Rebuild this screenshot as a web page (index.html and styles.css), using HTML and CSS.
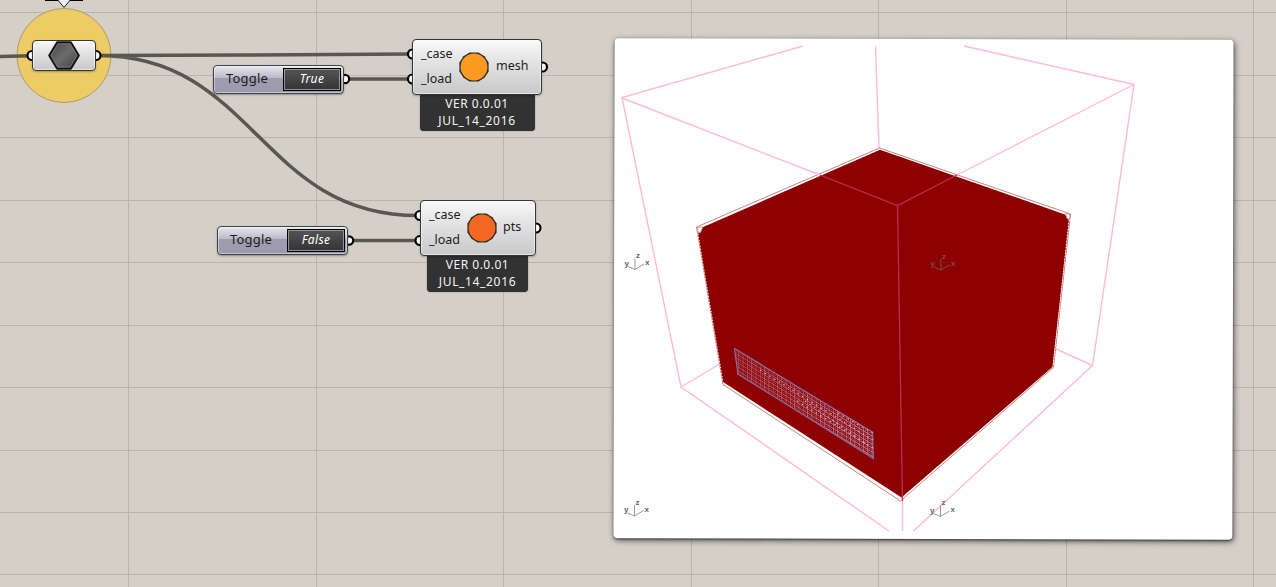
FILE: index.html
```html
<!DOCTYPE html>
<html lang="en">
<head>
<meta charset="utf-8">
<title>Node canvas</title>
<link rel="stylesheet" href="styles.css">
</head>
<body>
<main class="canvas">
  <svg class="layer" viewBox="0 0 1276 587">
    <path class="grid" d="M128.5 0V587M316.5 0V587M503.5 0V587M691.5 0V587M878.5 0V587M1066.5 0V587M1253.5 0V587M0 12.5H1276M0 75.5H1276M0 137.5H1276M0 200.5H1276M0 262.5H1276M0 325.5H1276M0 387.5H1276M0 450.5H1276M0 512.5H1276M0 574.5H1276"/>
    <circle class="halo" cx="64" cy="55.500" r="47"/>
    <path class="marker-line" d="M45 0H83"/>
    <path class="marker" d="M57 -1L64 7.500L71 -1"/>
    <path class="wire" d="M0 56.500L31 55.800M98 55.500C200 55.500 310 54.500 411 54M98 55.500C255 55.500 260 215.500 418 215.500M346 79H411M350 240.500H418"/>
    <g class="grip">
      <circle cx="32" cy="55.500" r="4.500"/><circle cx="96" cy="55.500" r="4.500"/>
      <circle cx="345" cy="79" r="4.200"/><circle cx="349" cy="240.500" r="4.200"/>
      <circle cx="412.500" cy="54" r="4.500"/><circle cx="412.500" cy="79" r="4.500"/><circle cx="542.500" cy="67" r="4.500"/>
      <circle cx="420" cy="215.500" r="4.500"/><circle cx="420" cy="240.500" r="4.500"/><circle cx="536" cy="228" r="4.500"/>
    </g>
  </svg>

  <div class="node hexnode">
    <svg width="32" height="29" viewBox="1 .5 30 27">
      <defs>
        <linearGradient id="hexfill" x1="0" y1="0" x2="1" y2="1"><stop offset="0" stop-color="#333"/><stop offset=".5" stop-color="#666"/><stop offset="1" stop-color="#2b2b2b"/></linearGradient>
        <pattern id="weave" width="2" height="2" patternUnits="userSpaceOnUse"><path d="M0 0h1v1H0zM1 1h1v1H1z" fill="#888" opacity=".35"/></pattern>
      </defs>
      <path d="M9.500 1.500H22.500L30 14L22.500 26.500H9.500L2 14Z" fill="url(#hexfill)" stroke="#111" stroke-width="1.600" stroke-linejoin="round"/>
      <path d="M10.500 3.300H21.500L28 14L21.500 24.700H10.500L4 14Z" fill="url(#weave)" stroke="#777" stroke-width=".8"/>
    </svg>
  </div>

  <div class="toggle toggle-true"><span class="toggle-name">Toggle</span><span class="toggle-value">True</span></div>
  <div class="toggle toggle-false"><span class="toggle-name">Toggle</span><span class="toggle-value">False</span></div>

  <section class="component component-mesh">
    <div class="node body">
      <div class="inputs"><span>_case</span><span>_load</span></div>
      <svg class="dot" width="30" height="30" viewBox="0 0 30 30"><path d="M10.500 .4h9l6 3.800 4.100 6.300v9l-4.100 6.300-6 3.800h-9l-6-3.800-4.100-6.300v-9l4.100-6.300z" fill="#302d28"/><circle cx="15" cy="15" r="13.400" fill="#fb9a20"/></svg>
      <span class="output">mesh</span>
    </div>
    <div class="version"><span>VER 0.0.01</span><span class="date">JUL_14_2016</span></div>
  </section>

  <section class="component component-pts">
    <div class="node body">
      <div class="inputs"><span>_case</span><span>_load</span></div>
      <svg class="dot" width="30" height="30" viewBox="0 0 30 30"><path d="M10.500 .4h9l6 3.800 4.100 6.300v9l-4.100 6.300-6 3.800h-9l-6-3.800-4.100-6.300v-9l4.100-6.300z" fill="#302d28"/><circle cx="15" cy="15" r="13.400" fill="#f46722"/></svg>
      <span class="output">pts</span>
    </div>
    <div class="version"><span>VER 0.0.01</span><span class="date">JUL_14_2016</span></div>
  </section>

  <div class="preview"></div>
  <svg class="layer" viewBox="0 0 1276 587">
    <defs>
      <pattern id="mesh" width="4.300" height="4" patternUnits="userSpaceOnUse" patternTransform="matrix(1 .605 0 1 734 348)">
        <path d="M0 .5H4.300M.5 0V4" stroke="#bd8098" stroke-width=".9"/><path d="M2 2.500h1.300" stroke="#b77c96" stroke-width="1"/>
      </pattern>
      <linearGradient id="meshfade" x1="0" x2="1"><stop offset="0" stop-color="#8e0000" stop-opacity=".4"/><stop offset="1" stop-color="#8e0000" stop-opacity="0"/></linearGradient>
      <g id="axes">
        <path d="M0 0V-11M0 0L9 -5.500M0 0L-7 -3"/>
        <text x="1" y="-11.500">z</text><text x="10" y="-4.500">x</text><text x="-10.500" y="-4">y</text>
      </g>
    </defs>
    <path class="box" d="M681 387L723 362M1092.500 365.500L1055 348.500M875.500 46L879 149"/>
    <path class="edge" d="M696.500 227L879.500 148L1070.500 214L1053.500 367.500L900.500 501L723 384.500Z"/>
    <path class="solid" d="M702 227.500L880 149.800L1065 214.500L1069 220L1052.500 367L901.500 497.500L723 382L698 234Z"/>
    <path class="edge-dots" d="M698 234L723 382M1069 220L1053 366"/>
    <path class="corner" d="M697.300 227.500L703 226.800L700.500 232.500L698.500 233ZM1070 214.500L1065.500 213.500L1067 218.500L1069.300 219.500Z"/>
    <g>
      <path d="M734.500 348.500L872.500 432L873.500 458.500L738 374Z" fill="url(#mesh)"/>
      <path d="M734.500 348.500L872.500 432L873.500 458.500L738 374Z" fill="url(#meshfade)" stroke="#866b9f" stroke-width="1.300"/>
      <path class="sparkle" d="M760 370L873 440M797 401L873 448M838 413L873 433M805 401L865 443"/>
    </g>
    <path class="box" d="M803 46L622 97.500L681 387L889 531M622 98L820 175M1134 84.500L964 46M1134 84.500L1092.500 365.500L913.500 531M1134 84.500L957 175M902.500 501V531"/>
    <path class="box-front" d="M820 175L897.500 205.500L957 175M897.500 205.500L902.500 501"/>
    <use href="#axes" class="axes" x="635" y="269.500"/>
    <use href="#axes" class="axes on-solid" x="941" y="270"/>
    <use href="#axes" class="axes" x="634.500" y="516"/>
    <use href="#axes" class="axes" x="940.500" y="516.500"/>
  </svg>
</main>
</body>
</html>
```
FILE: styles.css
```css
body { margin: 0; overflow: hidden; }
.canvas { position: relative; width: 1276px; height: 587px; overflow: hidden; background: #d4d0c8; font: 13px/18px "Noto Sans", "Open Sans", sans-serif; color: #1c1c1c; }
.layer { position: absolute; left: 0; top: 0; width: 1276px; height: 587px; }
.grid { fill: none; stroke: #b8b5ae; }
.halo { fill: #edcc65; stroke: #aa9d72; }
.marker { fill: #eee; stroke: #222; }
.marker-line { stroke: #000; stroke-width: 2; }
.wire { fill: none; stroke: #595751; stroke-width: 3.6; }
.grip { fill: #fff; stroke: #000; stroke-width: 2.2; }

.node { box-sizing: border-box; border: 1px solid #353535; border-radius: 4px; background: linear-gradient(#fafafa, #e8e8e8 30%, #c8c8c8); box-shadow: inset 0 0 0 1px #ffffff80, 0 1px 2px #0004; }
.hexnode { position: absolute; left: 32px; top: 40px; width: 64px; height: 31px; display: flex; align-items: center; justify-content: center; }

.toggle { position: absolute; box-sizing: border-box; width: 131px; height: 29px; display: flex; padding: 2px; border: 1px solid #44424a; border-radius: 4px; background: linear-gradient(#e8e7ee 0, #bab8c6 45%, #9f9caf 46%, #9e9aae 100%); box-shadow: inset 0 0 0 1px #ffffff66, 0 1px 2px #0005; }
.toggle-true { left: 213px; top: 65px; }
.toggle-false { left: 217px; top: 226px; }
.toggle-name { box-sizing: border-box; width: 67px; padding-left: 10px; line-height: 21px; letter-spacing: .2px; }
.toggle-value { box-sizing: border-box; width: 58px; height: 23px; border: 1px solid #000; box-shadow: inset 0 0 0 1px #929292; background: linear-gradient(#555, #333); color: #fff; font-style: italic; font-size: 12px; letter-spacing: .35px; line-height: 20px; text-align: center; }

.component { position: absolute; display: flex; flex-direction: column; align-items: center; }
.component-mesh { left: 412px; top: 39px; width: 130px; }
.component-pts { left: 420px; top: 200px; width: 116px; }
.body { position: relative; z-index: 1; width: 100%; height: 56px; display: flex; align-items: center; padding: 0 0 1px 8px; }
.inputs { display: flex; flex-direction: column; gap: 7px; width: 38px; font-size: 12.5px; }
.dot { flex: none; }
.output { margin: -1px 0 0 7px; font-size: 12.5px; }
.component-pts .output { margin-left: 6px; }
.version { box-sizing: border-box; height: 37px; width: 115px; margin-top: -1px; padding-top: 1px; display: flex; flex-direction: column; align-items: center; border-radius: 0 0 4px 4px; background: #323232; color: #f4f4f4; font-size: 12px; letter-spacing: .5px; box-shadow: 0 0 1px #222; }
.date { letter-spacing: .65px; margin-top: -1px; }
.component-pts .version { width: 101px; margin-right: 1px; }

.preview { position: absolute; left: 613.5px; top: 39px; width: 619px; height: 500px; border-radius: 4px; background: #fff; transform: rotate(.14deg); box-shadow: 1px 2px 6px #0009, 0 1px 2px #0008; }
.box { fill: none; stroke: #ffb9da; stroke-width: 1.4; }
.box-front { fill: none; stroke: #bd2d55; stroke-width: 1.3; }
.solid { fill: #8e0000; }
.edge { fill: #fff; stroke: #c78282; }
.edge-dots { fill: none; stroke: #fff; stroke-width: 1; stroke-dasharray: 1 2; }
.corner { fill: #fff; stroke: #bd7474; stroke-width: .7; }
.sparkle { fill: none; stroke: #c9b6d2; stroke-width: 1.1; stroke-dasharray: 1.5 4; }
.axes { fill: #666; stroke: #999; stroke-width: 1; }
.axes text, #axes text { font: bold 8px "Liberation Sans", sans-serif; stroke: none; }
#axes path { fill: none; }
.on-solid { fill: #705050; stroke: #705050; }
```
